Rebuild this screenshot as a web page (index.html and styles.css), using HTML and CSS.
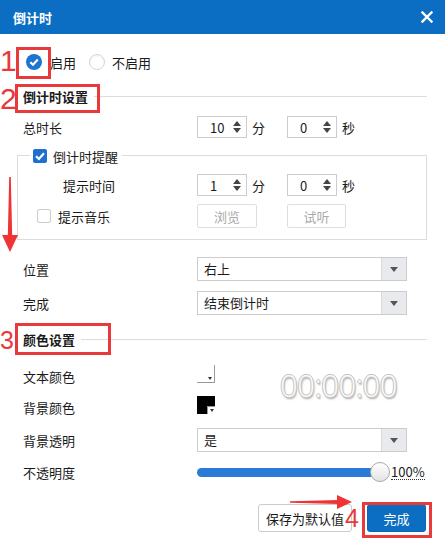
FILE: index.html
```html
<!DOCTYPE html>
<html lang="zh-CN">
<head>
  <meta charset="UTF-8">
  <title>倒计时</title>
  <link rel="stylesheet" href="styles.css">
</head>
<body>
  <div class="dialog">
    <!-- Title bar -->
    <div class="titlebar">
      <span class="title">倒计时</span>
      <svg class="close" width="12" height="12" viewBox="0 0 12 12">
        <path d="M1.5 1.5 L10.5 10.5 M10.5 1.5 L1.5 10.5" stroke="#fff" stroke-width="2.4" stroke-linecap="square"/>
      </svg>
    </div>

    <div class="content">
      <!-- Enable -->
      <div class="enable-row">
        <span class="round-check">
          <svg width="16" height="16" viewBox="0 0 16 16">
            <circle cx="8" cy="8" r="8" fill="#1d74d1"/>
            <path d="M4.3 8.2 L7 10.8 L11.8 5.6" fill="none" stroke="#fff" stroke-width="2.2"/>
          </svg>
        </span>
        <span class="opt-text">启用</span>
        <span class="radio"></span>
        <span class="opt-text-2">不启用</span>
      </div>

      <!-- Countdown settings -->
      <div class="section"><span>倒计时设置</span></div>

      <div class="row row-total">
        <span class="label">总时长</span>
        <span class="spin"><span class="spin-val">10</span><span class="spin-arrows"></span></span>
        <span class="unit">分</span>
        <span class="spin"><span class="spin-val">0</span><span class="spin-arrows"></span></span>
        <span class="unit">秒</span>
      </div>

      <div class="group">
        <div class="group-title">
          <span class="checkbox checked">
            <svg width="14" height="14" viewBox="0 0 14 14">
              <path d="M3 7.2 L5.9 9.9 L11 4.2" fill="none" stroke="#fff" stroke-width="2.2"/>
            </svg>
          </span>
          <span class="group-text">倒计时提醒</span>
        </div>
        <div class="row row-remind">
          <span class="label label-indent">提示时间</span>
          <span class="spin"><span class="spin-val">1</span><span class="spin-arrows"></span></span>
          <span class="unit">分</span>
          <span class="spin"><span class="spin-val">0</span><span class="spin-arrows"></span></span>
          <span class="unit">秒</span>
        </div>
        <div class="row row-music">
          <span class="label label-check"><span class="checkbox"></span><span class="check-text">提示音乐</span></span>
          <button class="btn-disabled btn-browse">浏览</button>
          <button class="btn-disabled btn-listen">试听</button>
        </div>
      </div>

      <div class="row row-select">
        <span class="label">位置</span>
        <span class="select"><span class="select-text">右上</span><span class="select-btn"><span class="caret"></span></span></span>
      </div>
      <div class="row row-select-2">
        <span class="label">完成</span>
        <span class="select"><span class="select-text">结束倒计时</span><span class="select-btn"><span class="caret"></span></span></span>
      </div>

      <!-- Colour settings -->
      <div class="section section-color"><span>颜色设置</span></div>

      <div class="color-block">
        <div class="color-rows">
          <div class="row row-color">
            <span class="label">文本颜色</span>
            <span class="swatch swatch-white"><span class="swatch-arrow"></span></span>
          </div>
          <div class="row row-color">
            <span class="label">背景颜色</span>
            <span class="swatch swatch-black"><span class="swatch-arrow"></span></span>
          </div>
        </div>
        <div class="preview">00:00:00</div>
      </div>

      <div class="row row-transparent">
        <span class="label">背景透明</span>
        <span class="select"><span class="select-text">是</span><span class="select-btn"><span class="caret"></span></span></span>
      </div>

      <div class="row row-opacity">
        <span class="label">不透明度</span>
        <span class="slider"><span class="track"></span><span class="thumb"></span></span>
        <span class="percent">100%</span>
      </div>

      <div class="footer">
        <button class="btn btn-save">保存为默认值</button>
        <button class="btn btn-done">完成</button>
      </div>
    </div>

    <!-- Annotations -->
    <span class="mark-box box1"></span>
    <span class="mark-box box2"></span>
    <span class="mark-box box3"></span>
    <span class="mark-box box4"></span>
    <span class="mark-num num1">1</span>
    <span class="mark-num num2">2</span>
    <span class="mark-num num3">3</span>
    <span class="mark-num num4">4</span>
    <svg class="arrow-down" width="20" height="85" viewBox="0 0 20 85">
      <polygon points="9.2,7 10.8,7 12.2,66 7.8,66" fill="#ee3434"/>
      <polygon points="2,65 18,65 10,82" fill="#ee3434"/>
    </svg>
    <svg class="arrow-right" width="72" height="20" viewBox="0 0 72 20">
      <polygon points="5,9.3 53,8 53,12 5,10.7" fill="#ee3434"/>
      <polygon points="52,3 52,17 67,10" fill="#ee3434"/>
    </svg>
  </div>
</body>
</html>
```

FILE: styles.css
```css
/* Base */
* {
  margin: 0;
  padding: 0;
  box-sizing: border-box;
}

body {
  font-family: "Noto Sans CJK SC", "Noto Sans", sans-serif;
  font-size: 13px;
  color: #1a1a1a;
  background-color: #fff;
  width: 445px;
  height: 543px;
  overflow: hidden;
}

.dialog {
  position: relative;
  width: 445px;
  height: 543px;
}

/* Title bar */
.titlebar {
  height: 34px;
  background-color: #0b6ec3;
  color: #fff;
  display: flex;
  align-items: center;
  justify-content: space-between;
  padding: 0 12px 0 13px;
}

.title {
  font-weight: bold;
  font-size: 13px;
}

.content {
  padding: 0 18px 0 23px;
}

/* Enable row */
.enable-row {
  margin-top: 14px;
  height: 28px;
  display: flex;
  align-items: center;
  padding-left: 3px;
}

.round-check {
  width: 16px;
  height: 16px;
  display: flex;
}

.opt-text {
  margin-left: 8px;
}

.radio {
  width: 16px;
  height: 16px;
  border-radius: 50%;
  border: 1px solid #d4d4d4;
  box-shadow: inset 0 1px 2px rgba(0, 0, 0, 0.06);
  margin-left: 13px;
}

.opt-text-2 {
  margin-left: 7px;
}

/* Section headers */
.section {
  margin-top: 8px;
  height: 24px;
  display: flex;
  align-items: center;
  font-weight: bold;
}

.section::after {
  content: '';
  flex: 1;
  height: 1px;
  background-color: #dcdcdc;
  margin-left: 6px;
}

.section-color {
  margin-top: 12px;
}

/* Rows */
.row {
  display: flex;
  align-items: center;
  height: 22px;
}

.label {
  width: 174px;
  flex-shrink: 0;
}

.row-total {
  margin-top: 8px;
}

/* Spin boxes */
.spin {
  width: 50px;
  height: 22px;
  border: 1px solid #ccc;
  display: flex;
  align-items: center;
  justify-content: space-between;
  padding: 0 5px 0 12px;
}

.spin-arrows {
  width: 8px;
  height: 12px;
  position: relative;
}

.spin-arrows::before,
.spin-arrows::after {
  content: '';
  position: absolute;
  left: 0;
  border-left: 4px solid transparent;
  border-right: 4px solid transparent;
}

.spin-arrows::before {
  top: 0;
  border-bottom: 5px solid #444;
}

.spin-arrows::after {
  bottom: 0;
  border-top: 5px solid #444;
}

.unit {
  width: 40px;
  padding-left: 5px;
}

/* Group box */
.group {
  margin: 17px 0 0 -6px;
  border: 1px solid #dcdcdc;
  padding-bottom: 11px;
}

.group-title {
  display: flex;
  align-items: center;
  height: 16px;
  margin-top: -8px;
  margin-left: 12px;
  padding: 0 4px 0 3px;
  background-color: #fff;
  width: fit-content;
}

.checkbox {
  width: 14px;
  height: 14px;
  border: 1px solid #ccc;
  border-radius: 2px;
  display: flex;
  flex-shrink: 0;
}

.checkbox.checked {
  background-color: #1d6fd0;
  border: none;
}

.group-text {
  margin-left: 6px;
}

.row-remind {
  margin-top: 10px;
}

.label-indent {
  width: 179px;
  padding-left: 45px;
}

.row-music {
  margin-top: 8px;
  height: 24px;
}

.label-check {
  width: 179px;
  padding-left: 19px;
  display: flex;
  align-items: center;
}

.check-text {
  margin-left: 7px;
}

.btn-disabled {
  height: 24px;
  border: 1px solid #dedede;
  border-radius: 2px;
  background-color: #fff;
  color: #aaa;
  font-family: inherit;
  font-size: 13px;
}

.btn-browse {
  width: 60px;
}

.btn-listen {
  width: 59px;
  margin-left: 30px;
}

/* Selects */
.row-select {
  margin-top: 17px;
  height: 24px;
}

.row-select-2 {
  margin-top: 10px;
  height: 24px;
}

.select {
  width: 210px;
  height: 24px;
  border: 1px solid #ccc;
  display: flex;
}

.select-text {
  flex: 1;
  padding-left: 6px;
  line-height: 22px;
}

.select-btn {
  width: 25px;
  background-color: #e8eaed;
  border-left: 1px solid #d9d9d9;
  display: flex;
  align-items: center;
  justify-content: center;
}

.caret {
  border-left: 4px solid transparent;
  border-right: 4px solid transparent;
  border-top: 5px solid #555;
}

/* Colours */
.color-block {
  margin-top: 14px;
  display: flex;
}

.color-rows {
  width: 257px;
  display: flex;
  flex-direction: column;
  gap: 7px;
}

.row-color {
  height: 24px;
  align-items: flex-start;
}

.row-color .label {
  line-height: 24px;
}

.swatch {
  width: 18px;
  height: 18px;
  position: relative;
}

.swatch-white {
  background-color: #fff;
  border-right: 1px solid #9a9a9a;
  border-bottom: 1px solid #9a9a9a;
}

.swatch-black {
  background-color: #000;
}

.swatch-arrow {
  position: absolute;
  right: 0;
  bottom: 0;
  width: 8px;
  height: 8px;
  display: flex;
  align-items: center;
  justify-content: center;
}

.swatch-black .swatch-arrow {
  background-color: #fff;
  border-left: 1px solid #999;
  border-top: 1px solid #999;
}

.swatch-arrow::after {
  content: '';
  border-left: 2px solid transparent;
  border-right: 2px solid transparent;
  border-top: 3px solid #333;
}

.preview {
  font-family: "Open Sans", "Liberation Sans", sans-serif;
  font-weight: 300;
  font-size: 31px;
  line-height: 34px;
  letter-spacing: -0.5px;
  color: #fbfbfb;
  text-shadow: -1px 0 #c4c4c4, 1px 0 #c4c4c4, 0 -1px #c4c4c4, 0 1px #c4c4c4, 1px 2px 2px #999;
  padding-top: 3px;
}

.row-transparent {
  margin-top: 8px;
  height: 24px;
}

/* Slider */
.row-opacity {
  margin-top: 10px;
  height: 20px;
}

.slider {
  width: 193px;
  height: 20px;
  position: relative;
  display: flex;
  align-items: center;
}

.track {
  width: 183px;
  height: 9px;
  border-radius: 5px;
  background-color: #2a7bd7;
}

.thumb {
  position: absolute;
  right: 0;
  top: 0;
  width: 20px;
  height: 20px;
  border-radius: 50%;
  border: 1px solid #aaa;
  background: linear-gradient(#fff, #e4e4e4);
}

.percent {
  margin-left: 1px;
  line-height: 14px;
  border-bottom: 1px dotted #333;
}

/* Footer buttons */
.footer {
  margin-top: 22px;
  display: flex;
  justify-content: flex-end;
  gap: 15px;
  padding-right: 1px;
}

.btn {
  height: 28px;
  border-radius: 3px;
  font-family: inherit;
  font-size: 13px;
}

.btn-save {
  width: 94px;
  border: 1px solid #ccc;
  background-color: #fff;
  color: #1a1a1a;
}

.btn-done {
  width: 59px;
  border: 1px solid #0b65b8;
  background-color: #0b6ec3;
  color: #fff;
}

/* Red annotations */
.mark-box {
  position: absolute;
  border: 3px solid #e8393b;
}

.box1 { left: 16px; top: 47px; width: 35px; height: 32px; }
.box2 { left: 15px; top: 84px; width: 85px; height: 29px; }
.box3 { left: 15px; top: 323px; width: 96px; height: 32px; }
.box4 { left: 362px; top: 502px; width: 70px; height: 36px; }

.mark-num {
  position: absolute;
  font-family: "Liberation Sans", Arial, sans-serif;
  color: #e8393b;
  line-height: 1;
}

.num1 { left: 0; top: 46px; font-size: 30px; }
.num2 { left: 0; top: 84px; font-size: 30px; }
.num3 { left: 0; top: 328px; font-size: 25px; }
.num4 { left: 345px; top: 506px; font-size: 25px; }

.arrow-down {
  position: absolute;
  left: 0;
  top: 170px;
}

.arrow-right {
  position: absolute;
  left: 285px;
  top: 492px;
}
```
